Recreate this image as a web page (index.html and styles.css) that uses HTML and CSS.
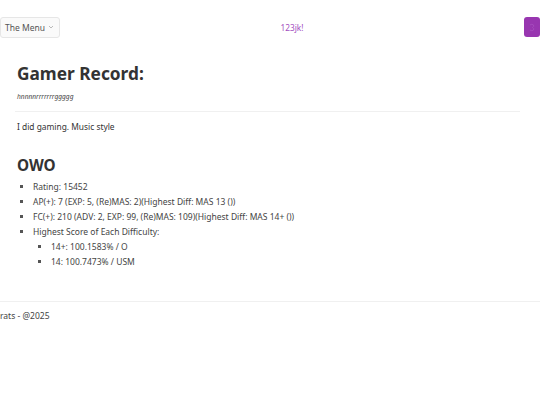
FILE: index.html
```html
<!DOCTYPE html>
<html>
<head>
<meta charset="utf-8">
<link rel="stylesheet" href="styles.css">
</head>
<body>
<nav class="nav">
  <button class="menu">The Menu <span class="chev"><svg width="6" height="4" viewBox="0 0 6 4"><path d="M1 1 L3 3 L5 1" fill="none" stroke="#aaa" stroke-width="0.8"/></svg></span></button>
  <span class="brand">123jk!</span>
  <span class="avatar"><svg width="8" height="9" viewBox="0 0 8 9"><path d="M2 2 Q4 0.5 5.5 2 Q6.5 3.5 4.5 4.5 Q6.5 5.5 5.5 7 Q4 8.5 2 7" fill="none" stroke="#a54bbd" stroke-width="1"/></svg></span>
</nav>
<main class="content">
  <h1 class="title">Gamer Record:</h1>
  <p class="sub">hnnnnrrrrrrrggggg</p>
  <hr class="rule">
  <p class="desc">I did gaming. Music style</p>
  <h2 class="section">OWO</h2>
  <ul class="list">
    <li>Rating: 15452</li>
    <li>AP(+): 7 (EXP: 5, (Re)MAS: 2)(Highest Diff: MAS 13 ())</li>
    <li>FC(+): 210 (ADV: 2, EXP: 99, (Re)MAS: 109)(Highest Diff: MAS 14+ ())</li>
    <li>Highest Score of Each Difficulty:
      <ul class="list nested">
        <li>14+: 100.1583% / O</li>
        <li>14: 100.7473% / USM</li>
      </ul>
    </li>
  </ul>
</main>
<footer class="footer">rats - @2025</footer>
</body>
</html>
```

FILE: styles.css
```css
* { box-sizing: border-box; }
body {
  margin: 0;
  font-family: "Noto Sans", "Open Sans", sans-serif;
  color: #333;
  background: #fff;
}
.nav {
  display: flex;
  align-items: center;
  justify-content: space-between;
  height: 54px;
}
.menu {
  display: flex;
  align-items: center;
  gap: 3px;
  width: 60px;
  height: 21px;
  padding: 0 0 0 4px;
  border: 1px solid #e6e6e6;
  border-radius: 3px;
  background: #fafafa;
  font-family: inherit;
  font-size: 8.5px;
  color: #555;
}
.chev { display: flex; }
.brand {
  font-size: 8.3px;
  color: #a44fbf;
}
.avatar {
  width: 16px;
  height: 20px;
  border-radius: 3px;
  background: #9836b0;
  display: flex;
  align-items: center;
  justify-content: center;
}
.content {
  padding: 0 20px 0 15px;
}
.title {
  margin: 9px 0 0 2px;
  font-size: 17.3px;
  font-weight: 700;
  line-height: 22px;
  color: #333;
}
.sub {
  margin: 9px 0 0 2px;
  font-size: 6.6px;
  line-height: 6.5px;
  font-style: italic;
  color: #444;
}
.rule {
  margin: 10.5px 0 0;
  border: 0;
  border-top: 1px solid #f0f0f0;
}
.desc {
  margin: 9px 0 0 2px;
  font-size: 8.4px;
  line-height: 11.4px;
  color: #333;
}
.section {
  margin: 24px 0 0 2px;
  font-size: 15.3px;
  font-weight: 700;
  line-height: 19.5px;
}
.list {
  margin: 3px 0 0;
  padding-left: 18px;
  list-style: square;
  font-size: 8.5px;
  line-height: 15px;
  color: #444;
}
.list li::marker { color: #555; }
.nested {
  margin: 0;
  padding-left: 18px;
}
.footer {
  margin-top: 32px;
  border-top: 1px solid #f0f0f0;
  padding-top: 8px;
  font-size: 8.5px;
  line-height: 11.6px;
  color: #444;
}
```
